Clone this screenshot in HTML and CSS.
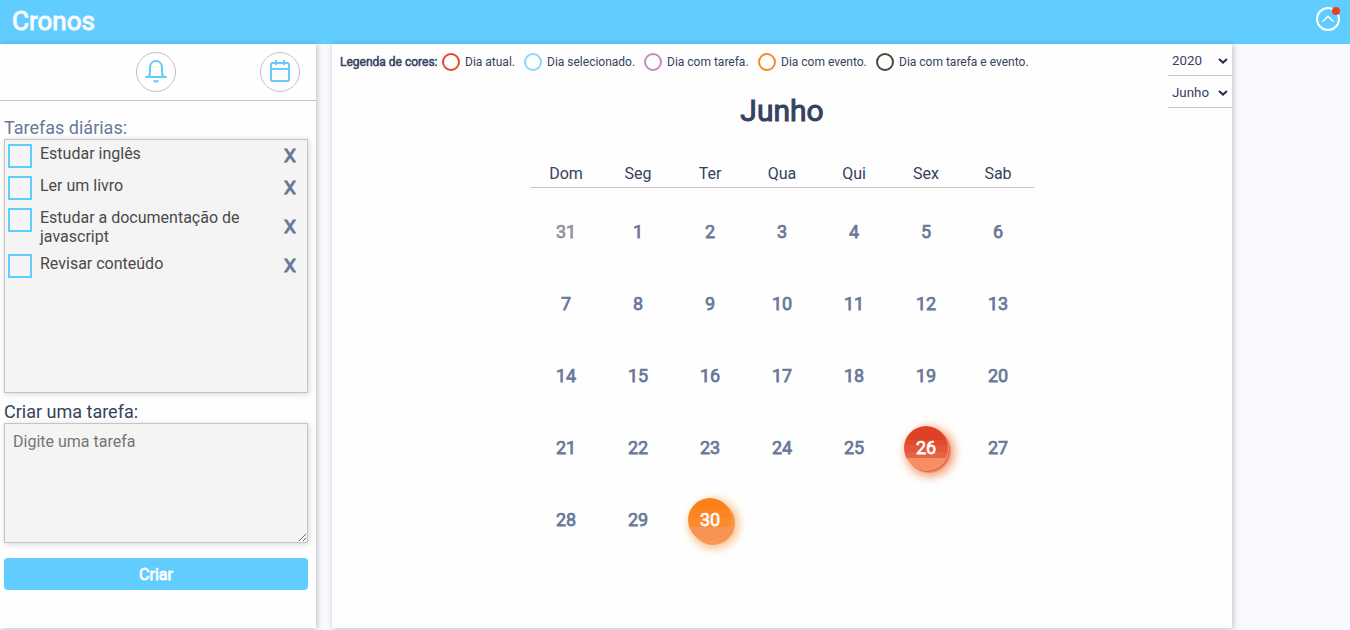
FILE: index.html
```html
<!DOCTYPE html>
<html lang="pt-BR">
<head>
<meta charset="utf-8">
<title>Cronos</title>
<link rel="stylesheet" href="styles.css">
</head>
<body>
<header class="header">
  <h1 class="logo">Cronos</h1>
  <button class="profile" aria-label="Menu">
    <svg width="24" height="24" viewBox="0 0 24 24" fill="none" stroke="#fff"><circle cx="12" cy="12" r="11" stroke-width="2"/><path d="M6.500 14.800 12 9.300l5.500 5.500" stroke-width="1.400"/></svg>
    <span class="badge"></span>
  </button>
</header>
<main class="content">
  <aside class="sidebar">
    <nav class="tools">
      <button class="tool" aria-label="Notificações"><svg width="24" height="24" viewBox="0 0 24 24" fill="none" stroke="#61cdff" stroke-width="2" stroke-linejoin="round"><path d="M2.200 17c2.200 0 3.800-1.500 3.800-4.500V7.500C6 3.800 8.500 1 12 1s6 2.800 6 6.500v5c0 3 1.600 4.500 3.800 4.500z"/><path d="M10 20.300c.9 1.800 3.100 1.800 4 0"/></svg></button>
      <button class="tool" aria-label="Calendário"><svg width="24" height="24" viewBox="0 0 24 24" fill="none" stroke="#61cdff" stroke-width="2" stroke-linejoin="round"><rect x="3" y="3" width="18" height="18" rx="1.500"/><path d="M3 9h18M8 0v5M16 0v5"/></svg></button>
    </nav>
    <section class="tasks">
      <h2 class="label label-muted">Tarefas diárias:</h2>
      <ul class="task-list">
        <li class="task"><span class="check"></span><p class="task-text">Estudar inglês</p><button class="remove">X</button></li>
        <li class="task"><span class="check"></span><p class="task-text">Ler um livro</p><button class="remove">X</button></li>
        <li class="task"><span class="check"></span><p class="task-text">Estudar a documentação de javascript</p><button class="remove">X</button></li>
        <li class="task"><span class="check"></span><p class="task-text">Revisar conteúdo</p><button class="remove">X</button></li>
      </ul>
      <label class="label" for="task">Criar uma tarefa:</label>
      <textarea class="task-input" id="task" placeholder="Digite uma tarefa"></textarea>
      <button class="create">Criar</button>
    </section>
  </aside>
  <section class="calendar">
    <div class="topbar">
      <div class="legend">
        <strong class="legend-title">Legenda de cores:</strong>
        <span class="key key-today">Dia atual.</span>
        <span class="key key-selected">Dia selecionado.</span>
        <span class="key key-task">Dia com tarefa.</span>
        <span class="key key-event">Dia com evento.</span>
        <span class="key key-both">Dia com tarefa e evento.</span>
      </div>
      <div class="selects">
        <div class="select">2020<svg width="10" height="6" viewBox="0 0 10 6"><path d="M1 1l4 3.600L9 1" fill="none" stroke="#252f48" stroke-width="2"/></svg></div>
        <div class="select">Junho<svg width="10" height="6" viewBox="0 0 10 6"><path d="M1 1l4 3.600L9 1" fill="none" stroke="#252f48" stroke-width="2"/></svg></div>
      </div>
    </div>
    <h2 class="month">Junho</h2>
    <div class="week"><span>Dom</span><span>Seg</span><span>Ter</span><span>Qua</span><span>Qui</span><span>Sex</span><span>Sab</span></div>
    <div class="days">
      <span class="day day-other">31</span><span class="day">1</span><span class="day">2</span><span class="day">3</span><span class="day">4</span><span class="day">5</span><span class="day">6</span>
      <span class="day">7</span><span class="day">8</span><span class="day">9</span><span class="day">10</span><span class="day">11</span><span class="day">12</span><span class="day">13</span>
      <span class="day">14</span><span class="day">15</span><span class="day">16</span><span class="day">17</span><span class="day">18</span><span class="day">19</span><span class="day">20</span>
      <span class="day">21</span><span class="day">22</span><span class="day">23</span><span class="day">24</span><span class="day">25</span><span class="day day-today">26</span><span class="day">27</span>
      <span class="day">28</span><span class="day">29</span><span class="day day-event">30</span>
    </div>
  </section>
</main>
</body>
</html>
```
FILE: styles.css
```css
*, *::before { box-sizing: border-box; margin: 0; padding: 0; }
body { height: 630px; overflow: hidden; background: #f8faff; color: #354260; font-family: Roboto, sans-serif; font-size: 16px; }
button { border: 0; background: none; font-family: inherit; }
.header { height: 44px; padding: 0 10px 0 12px; display: flex; align-items: center; justify-content: space-between; background: #61cdff; }
.logo { padding-bottom: 3px; color: #f8faff; font-size: 26px; line-height: 30px; font-weight: 400; -webkit-text-stroke: 1px; }
.profile { position: relative; width: 24px; height: 24px; margin-bottom: 6px; }
.profile svg { display: block; }
.badge { position: absolute; top: 0; right: 0; width: 8px; height: 8px; border-radius: 50%; background: #e44125; }
.content { display: flex; gap: 16px; height: 584px; }
.sidebar { width: 316px; background: #fefefe; box-shadow: 1px 1px 6px rgba(0,0,0,.25); }
.tools { height: 57px; padding: 8px 16px 0 136px; display: flex; justify-content: space-between; border-bottom: 1px solid #c4c4c4; }
.tool { width: 40px; height: 40px; display: flex; align-items: center; justify-content: center; border: 1px solid #c4c4c4; border-radius: 50%; }
.tasks { padding: 16px 8px 0 4px; display: flex; flex-direction: column; }
.label { font-size: 18px; font-weight: 400; line-height: 22px; }
.label-muted { color: #697899; }
.task-list { height: 254px; margin-bottom: 8px; padding: 2px 8px 0 3px; list-style: none; background: #f4f4f4; border: 1px solid #c4c4c4; box-shadow: 1px 1px 6px rgba(0,0,0,.16); }
.task { display: grid; grid-template-columns: 24px 224px 1fr; column-gap: 8px; align-items: center; min-height: 26px; margin-bottom: 6px; }
.check { align-self: start; width: 24px; height: 24px; margin-top: 2px; border: 2px solid #61cdff; }
.task-text { align-self: start; padding-right: 10px; padding-top: 2px; color: #4a4a4a; line-height: 19px; }
.remove { width: 18px; justify-self: end; padding-top: 2px; color: #697899; font-size: 19px; line-height: 22px; -webkit-text-stroke: 1px; }
.task-input { height: 120px; padding: 8px; resize: vertical; border: 1px solid #c4c4c4; background: #f4f4f4; font: 16px/19px Roboto, sans-serif; box-shadow: 1px 1px 6px rgba(0,0,0,.16); }
.task-input::placeholder { color: #757575; }
.create { height: 32px; margin-top: 15px; border-radius: 4px; background: #61cdff; color: #fefefe; font-size: 16px; -webkit-text-stroke: .8px; }
.calendar { width: 900px; background: #fefefe; box-shadow: 1px 1px 6px rgba(0,0,0,.25); }
.topbar { height: 64px; padding-left: 8px; display: flex; justify-content: space-between; align-items: flex-start; }
.legend { height: 36px; display: flex; align-items: center; font-size: 12px; white-space: nowrap; }
.legend-title { width: 102px; font-weight: 400; -webkit-text-stroke: .5px; }
.key { display: flex; align-items: center; gap: 5px; }
.key::before { content: ""; width: 18px; height: 18px; border: 2px solid; border-radius: 50%; }
.key-today { width: 82px; }
.key-selected { width: 120px; }
.key-task { width: 114px; }
.key-event { width: 118px; }
.key-today::before { border-color: #e04a27; }
.key-selected::before { border-color: #8dd6fa; }
.key-task::before { border-color: #c28cc2; }
.key-event::before { border-color: #f58a2c; }
.key-both::before { border-color: #3c4d38; }
.select { width: 64px; height: 32px; padding: 2px 4px 0; display: flex; align-items: center; justify-content: space-between; border-bottom: 1px solid #c4c4c4; font-size: 13.333px; }
.month { margin-top: -15px; text-align: center; font-size: 30px; line-height: 36px; font-weight: 400; -webkit-text-stroke: 1px; }
.week { width: 504px; height: 30px; margin: 29px auto 0; display: grid; grid-template-columns: repeat(7, 72px); text-align: center; line-height: 31px; border-bottom: 1px solid #c4c4c4; }
.days { width: 504px; margin: 8px auto 0; display: grid; grid-template-columns: repeat(7, 72px); grid-auto-rows: 72px; place-items: center; }
.day { width: 44px; height: 44px; border-radius: 50%; text-align: center; color: #697899; font-size: 18px; font-weight: 400; line-height: 44px; -webkit-text-stroke: .75px; }
.day-other { color: #998f9c; }
.day-today { color: #f8faff; background: linear-gradient(#df4124 0 32%, #e14c2e 32% 44%, #e4553a 44% 60%, #e66246 60% 72%, #f58e61 72%); box-shadow: 1px 1px 0 #f2916b, 2px 2px 0 #e9654a, 3px 3px 0 #f2916b, 4px 4px 8px 3px #f2a67b; }
.day-event { color: #f8faff; background: linear-gradient(#fb8017 0 25%, #fb8420 25% 45%, #fb8b2d 45% 65%, #f99355 65%); box-shadow: 2px 2px 0 #f7944d, 3px 3px 0 #f49b59, 4px 4px 8px 3px #f8c48c; }
```
